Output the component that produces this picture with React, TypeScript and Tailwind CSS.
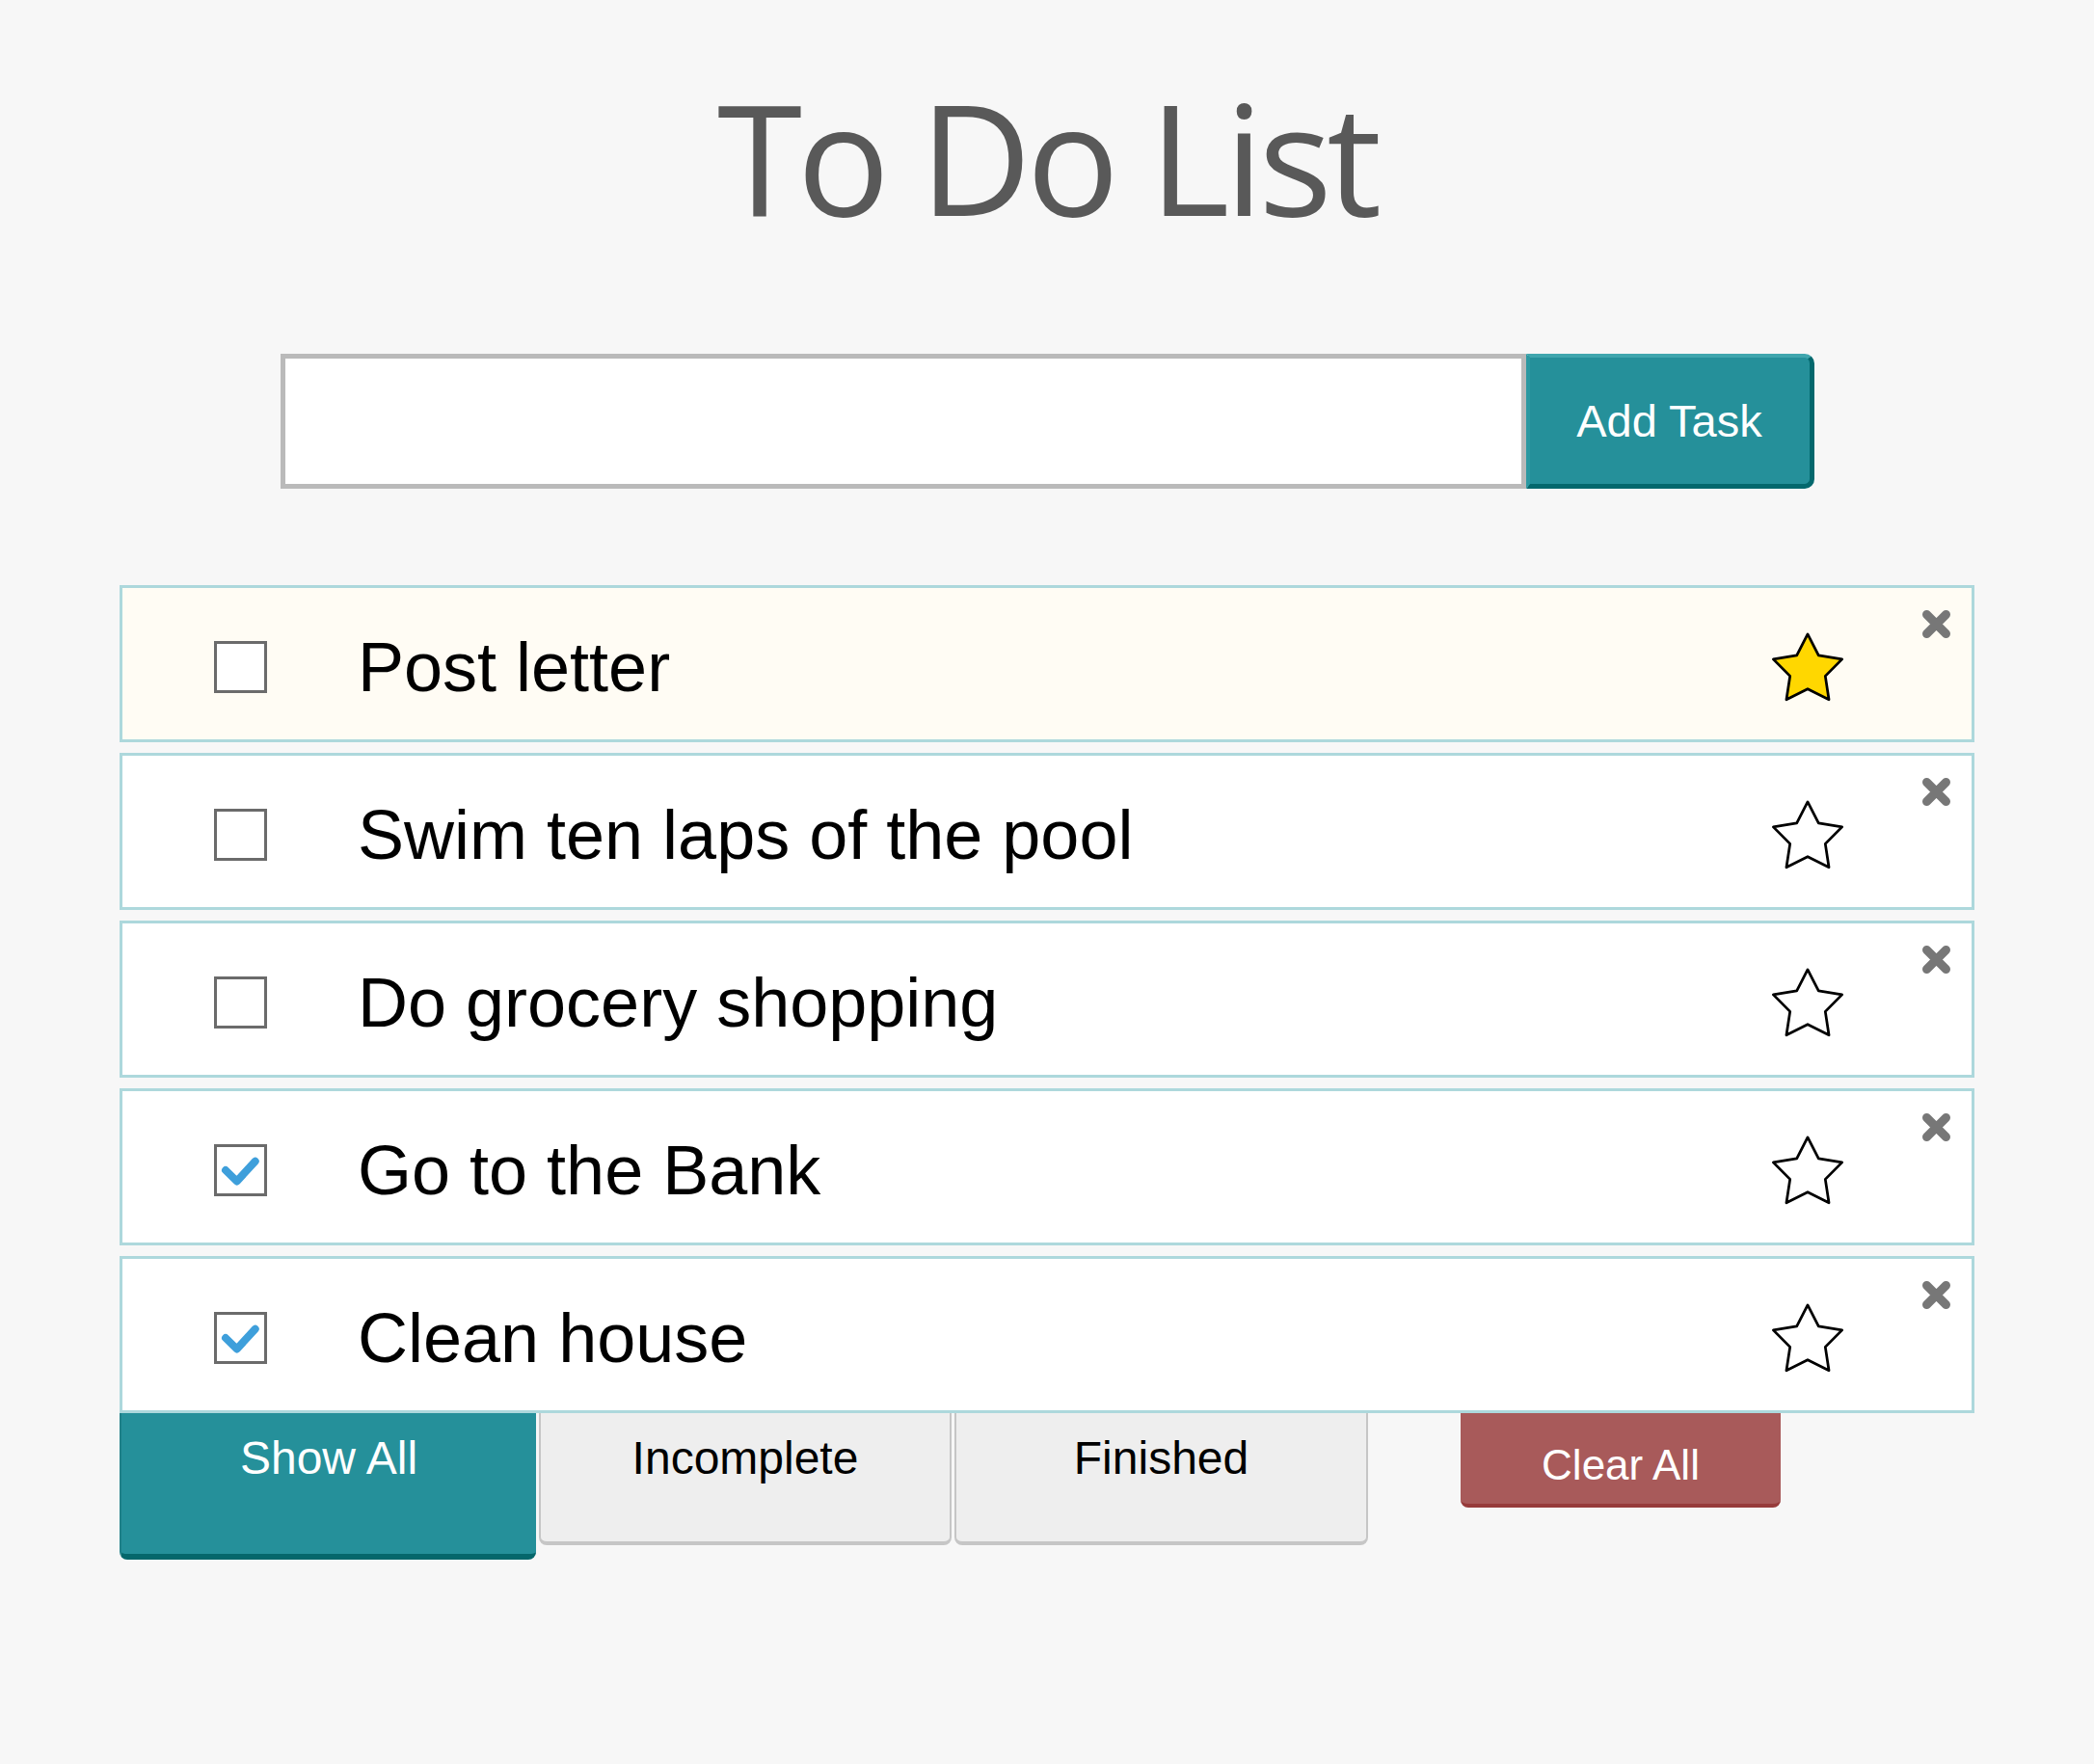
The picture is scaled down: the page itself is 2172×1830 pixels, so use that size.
import React, { useState } from "react";

type Task = { id: number; text: string; done: boolean; starred: boolean };

const initialTasks: Task[] = [
  { id: 1, text: "Post letter", done: false, starred: true },
  { id: 2, text: "Swim ten laps of the pool", done: false, starred: false },
  { id: 3, text: "Do grocery shopping", done: false, starred: false },
  { id: 4, text: "Go to the Bank", done: true, starred: false },
  { id: 5, text: "Clean house", done: true, starred: false },
];

function Star({ filled }: { filled: boolean }) {
  return (
    <svg width="76" height="72" viewBox="-38.5 -40 77 73">
      <polygon
        points="0,-38 11.46,-15.78 36.14,-11.74 18.55,6.03 22.34,30.74 0,19.5 -22.34,30.74 -18.55,6.03 -36.14,-11.74 -11.46,-15.78"
        fill={filled ? "#ffd700" : "#ffffff"}
        stroke="#000000"
        strokeWidth="2.8"
        strokeLinejoin="round"
      />
    </svg>
  );
}

function CloseIcon() {
  return (
    <svg width="29" height="29" viewBox="0 0 29 29">
      <path d="M4.5 4.5 L24.5 24.5 M24.5 4.5 L4.5 24.5" stroke="#777777" strokeWidth="9" strokeLinecap="round" />
    </svg>
  );
}

function CheckBox({ checked }: { checked: boolean }) {
  return (
    <div className="w-[55px] h-[54px] shrink-0 border-[3px] border-[#6b6b6b] bg-white">
      {checked && (
        <svg width="49" height="48" viewBox="0 0 49 48">
          <path
            d="M9 24 L20.7 35.5 L39.7 14.7"
            fill="none"
            stroke="#3e9fdb"
            strokeWidth="8"
            strokeLinecap="round"
            strokeLinejoin="round"
          />
        </svg>
      )}
    </div>
  );
}

export default function App() {
  const [tasks] = useState<Task[]>(initialTasks);
  const [filter, setFilter] = useState("all");

  return (
    <div className="min-h-screen bg-[#f7f7f7] font-['Liberation_Sans',Arial,sans-serif]">
      <h1 className="pt-[82px] text-center text-[160px] leading-none tracking-[-0.033em] text-[#595959] font-['Open_Sans',sans-serif]">
        To Do List
      </h1>

      <div className="mt-[125px] flex justify-center">
        <input
          type="text"
          className="w-[1292px] h-[140px] border-[5px] border-[#bababa] bg-white px-4 text-[47px] outline-none"
        />
        <button className="w-[299px] h-[140px] border-t-4 border-l-4 border-r-[5px] border-b-[5px] border-t-[#40a6ae] border-l-[#2b98a1] border-r-[#04686d] border-b-[#04686d] rounded-r-[10px] bg-[#25909a] text-white text-[47px] leading-none">
          Add Task
        </button>
      </div>

      <div className="mx-auto mt-[100px] w-[1924px]">
        <ul className="flex flex-col gap-[11px]">
          {tasks.map((task) => (
            <li
              key={task.id}
              className={
                "flex h-[163px] items-center border-[3px] border-[#add8dc] pt-[6px] " +
                (task.starred ? "bg-[#fffcf4]" : "bg-white")
              }
            >
              <div className="ml-[95px]">
                <CheckBox checked={task.done} />
              </div>
              <span className="ml-[94px] flex-1 text-[72px] leading-none text-black">{task.text}</span>
              <Star filled={task.starred} />
              <button className="ml-[81px] mr-[22px] self-start mt-[17px]">
                <CloseIcon />
              </button>
            </li>
          ))}
        </ul>

        <div className="flex items-start">
          <button
            onClick={() => setFilter("all")}
            className="w-[432px] h-[152px] pt-[23px] rounded-b-[8px] border-l-2 border-b-[6px] border-l-[#1f8088] border-b-[#05676b] bg-[#25909a] text-[48px] leading-none text-white flex justify-center"
          >
            Show All
          </button>
          <button
            onClick={() => setFilter("incomplete")}
            className="ml-[3px] w-[428px] h-[137px] pt-[23px] rounded-b-[8px] border-x-2 border-b-4 border-[#c6c6c6] bg-[#eeeeee] text-[48px] leading-none text-black flex justify-center"
          >
            Incomplete
          </button>
          <button
            onClick={() => setFilter("finished")}
            className="ml-[3px] w-[429px] h-[137px] pt-[23px] rounded-b-[8px] border-x-2 border-b-4 border-[#c6c6c6] bg-[#eeeeee] text-[48px] leading-none text-black flex justify-center"
          >
            Finished
          </button>
          <button className="ml-[96px] w-[332px] h-[98px] pt-[32px] rounded-b-[8px] border-b-4 border-[#973b3b] bg-[#a85a5a] text-[44px] leading-none text-white flex justify-center">
            Clear All
          </button>
        </div>
        <span className="hidden">{filter}</span>
      </div>
    </div>
  );
}
